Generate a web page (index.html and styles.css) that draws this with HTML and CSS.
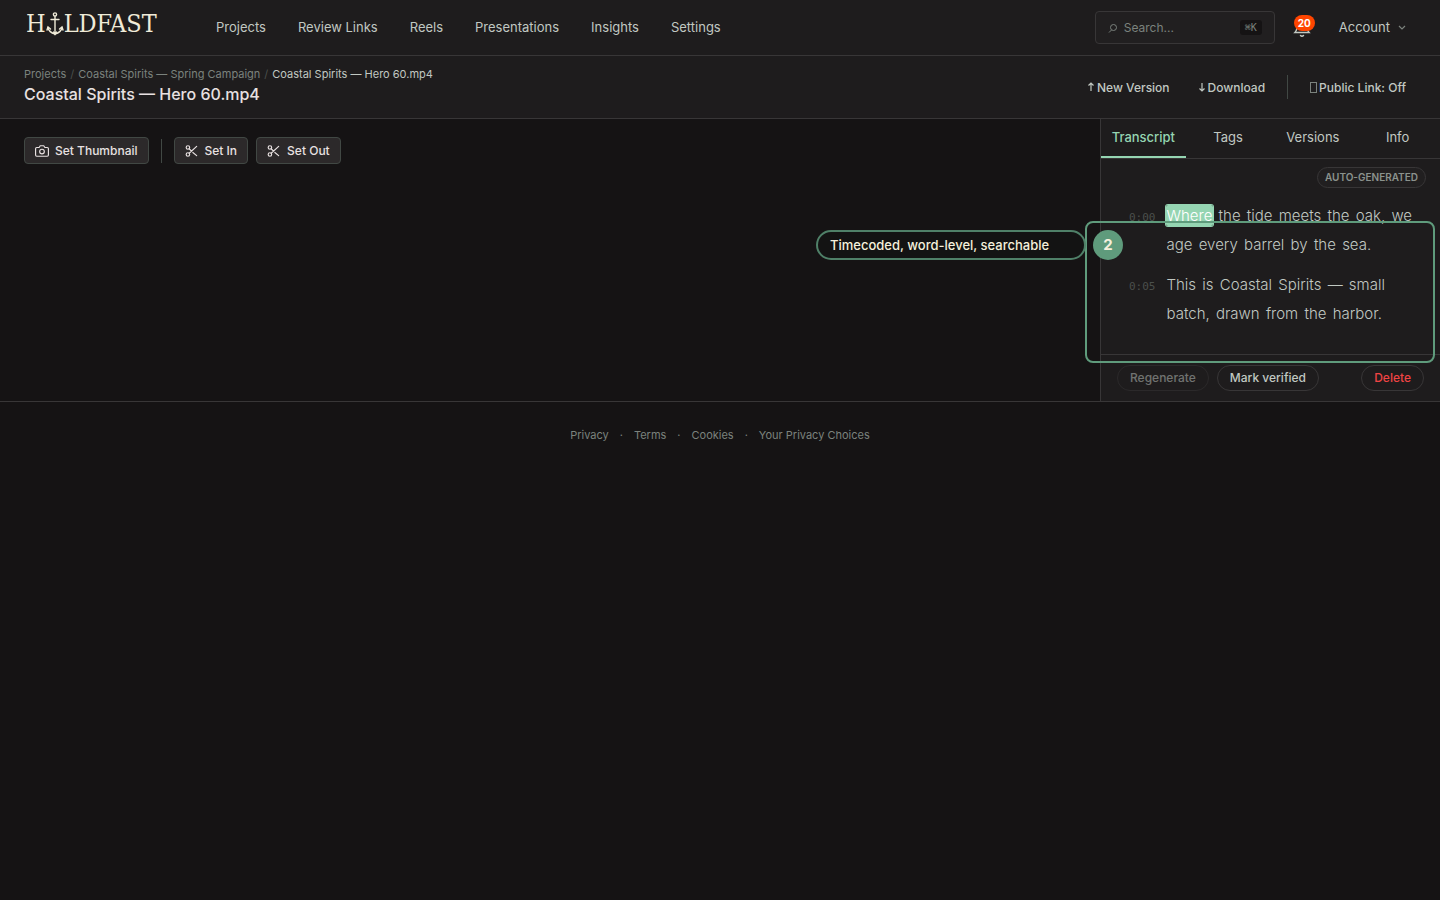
FILE: index.html
```html
<!DOCTYPE html>
<html lang="en">
<head>
<meta charset="UTF-8">
<meta name="viewport" content="width=device-width, initial-scale=1.0">
<title>Coastal Spirits — Hero 60.mp4</title>
<link rel="stylesheet" href="styles.css">
</head>
<body>

<header class="topbar">
    <a href="#" class="logo" aria-label="Holdfast">
        <span>H</span>
        <svg class="anchor" viewBox="0 0 18 24" fill="none" stroke="currentColor" stroke-width="1.4" stroke-linecap="round">
            <circle cx="9" cy="2.500" r="1.600"/>
            <path d="M9 4v18M5 7.500h8M2 16c1 4 3.500 5 7 6 3.500-1 6-2 7-6"/>
            <path d="M1 18l1-3 2.500 2M17 18l-1-3-2.500 2"/>
            <path d="M7.500 20L9 22.500l1.500-2.500" fill="currentColor"/>
        </svg>
        <span>LDFAST</span>
    </a>
    <nav class="main-nav">
        <a href="#">Projects</a>
        <a href="#">Review Links</a>
        <a href="#">Reels</a>
        <a href="#">Presentations</a>
        <a href="#">Insights</a>
        <a href="#">Settings</a>
    </nav>
    <div class="topbar-right">
        <label class="search">
            <svg width="10" height="10" viewBox="0 0 10 10" fill="none" stroke="currentColor">
                <circle cx="5.500" cy="4.500" r="3"/>
                <path d="M3.500 7L1 9.500"/>
            </svg>
            <input type="text" placeholder="Search..." aria-label="Search">
            <kbd>⌘K</kbd>
        </label>
        <button class="bell" aria-label="Notifications">
            <svg width="18" height="18" viewBox="0 0 18 18" fill="none" stroke="currentColor" stroke-width="1.500" stroke-linecap="round">
                <path d="M2 13.500h14c-1.500-1.500-2-3-2-6a5 5 0 0 0-10 0c0 3-.5 4.500-2 6z"/>
                <path d="M7.500 16.500c1 1 2 1 3 0"/>
            </svg>
            <span class="bell-count">20</span>
        </button>
        <button class="account">Account
            <svg width="8" height="8" viewBox="0 0 8 8" fill="none" stroke="currentColor" stroke-width="1.200"><path d="M1 3l3 3 3-3"/></svg>
        </button>
    </div>
</header>

<section class="asset-bar">
    <div>
        <nav class="breadcrumb">
            <a href="#">Projects</a>
            <span class="slash">/</span>
            <a href="#">Coastal Spirits — Spring Campaign</a>
            <span class="slash">/</span>
            <span class="current">Coastal Spirits — Hero 60.mp4</span>
        </nav>
        <h1>Coastal Spirits — Hero 60.mp4</h1>
    </div>
    <div class="asset-actions">
        <button><svg width="8" height="10" viewBox="0 0 8 10" fill="none" stroke="currentColor" stroke-width="1.200"><path d="M4 9V1M1.500 3.500L4 1l2.500 2.500"/></svg>New Version</button>
        <button><svg width="8" height="10" viewBox="0 0 8 10" fill="none" stroke="currentColor" stroke-width="1.200"><path d="M4 1v8M1.500 6.500L4 9l2.500-2.500"/></svg>Download</button>
        <span class="divider"></span>
        <button><span class="link-icon"></span>Public Link: Off</button>
    </div>
</section>

<main class="workspace">
    <div class="stage">
        <div class="tools">
            <button class="tool">
                <svg width="14" height="14" viewBox="0 0 24 24" fill="none" stroke="currentColor" stroke-width="2" stroke-linejoin="round">
                    <path d="M23 19a2 2 0 0 1-2 2H3a2 2 0 0 1-2-2V8a2 2 0 0 1 2-2h4l2-3h6l2 3h4a2 2 0 0 1 2 2z"/>
                    <circle cx="12" cy="13" r="4"/>
                </svg>
                Set Thumbnail
            </button>
            <span class="divider"></span>
            <button class="tool">
                <svg width="14" height="14" viewBox="0 0 24 24" fill="none" stroke="currentColor" stroke-width="2" stroke-linecap="round">
                    <circle cx="5" cy="6" r="3"/>
                    <circle cx="5" cy="18" r="3"/>
                    <path d="M20 4L7.120 15.880M13.470 14.480L20 20M7.120 8.120L11 12"/>
                </svg>
                Set In
            </button>
            <button class="tool">
                <svg width="14" height="14" viewBox="0 0 24 24" fill="none" stroke="currentColor" stroke-width="2" stroke-linecap="round">
                    <circle cx="5" cy="6" r="3"/>
                    <circle cx="5" cy="18" r="3"/>
                    <path d="M20 4L7.120 15.880M13.470 14.480L20 20M7.120 8.120L11 12"/>
                </svg>
                Set Out
            </button>
        </div>
    </div>

    <aside class="panel">
        <div class="tabs">
            <button class="active">Transcript</button>
            <button>Tags</button>
            <button>Versions</button>
            <button>Info</button>
        </div>
        <div class="status-row"><span class="status">AUTO-GENERATED</span></div>
        <div class="transcript">
            <div class="line">
                <time>0:00</time>
                <p><span class="word playing">Where</span> <span class="word">the</span> <span class="word">tide</span> <span class="word">meets</span> <span class="word">the</span> <span class="word">oak,</span> <span class="word">we</span> <span class="word">age</span> <span class="word">every</span> <span class="word">barrel</span> <span class="word">by</span> <span class="word">the</span> <span class="word">sea.</span></p>
            </div>
            <div class="line">
                <time>0:05</time>
                <p><span class="word">This</span> <span class="word">is</span> <span class="word">Coastal</span> <span class="word">Spirits</span> <span class="word">—</span> <span class="word">small</span> <span class="word">batch,</span> <span class="word">drawn</span> <span class="word">from</span> <span class="word">the</span> <span class="word">harbor.</span></p>
            </div>
        </div>
        <div class="panel-actions">
            <button disabled>Regenerate</button>
            <button>Mark verified</button>
            <button class="delete">Delete</button>
        </div>

        <!-- tour step over the transcript -->
        <div class="tour-frame">
            <span class="tour-label">Timecoded, word-level, searchable</span>
            <span class="tour-step">2</span>
        </div>
    </aside>
</main>

<footer class="footer">
    <a href="#">Privacy</a><span>·</span><a href="#">Terms</a><span>·</span><a href="#">Cookies</a><span>·</span><a href="#">Your Privacy Choices</a>
</footer>

</body>
</html>
```
FILE: styles.css
```css
* {
    box-sizing: border-box;
}
body {
    margin: 0;
    background-color: #151314;
    color: #c1c8c2;
    font-family: Inter, "Open Sans", sans-serif;
    font-size: 13px;
}
a {
    color: inherit;
    text-decoration: none;
}
button {
    font: inherit;
    color: inherit;
    background: none;
    border: none;
    padding: 0;
    cursor: pointer;
    white-space: nowrap;
}
svg {
    flex: none;
}
.divider {
    width: 1px;
    height: 24px;
    background-color: #414844;
}

/* top bar */
.topbar {
    display: flex;
    align-items: center;
    height: 56px;
    padding: 0 34px 0 26px;
    background-color: #1e1c1d;
    border-bottom: 1px solid #383637;
}
.logo {
    display: flex;
    align-items: center;
    width: 134px;
    margin: 0 56px 8px 0;
    color: #f0ebd8;
    font-family: "DejaVu Serif Condensed", "DejaVu Serif", serif;
    font-stretch: condensed;
    font-size: 25px;
    line-height: 32px;
}
.anchor {
    width: 18px;
    height: 24px;
}
.main-nav {
    display: flex;
    gap: 32px;
    padding-bottom: 2px;
}
.topbar-right {
    display: flex;
    align-items: center;
    margin-left: auto;
}
.search {
    display: flex;
    align-items: center;
    width: 180px;
    height: 33px;
    padding: 0 12px;
    border: 1px solid #383637;
    border-radius: 4px;
    background-color: #211f20;
    color: #7b827d;
}
.search input {
    flex: 1;
    min-width: 0;
    margin-left: 6px;
    padding: 0;
    border: none;
    outline: none;
    background: none;
    color: inherit;
    font: inherit;
    font-size: 12px;
}
.search input::placeholder {
    color: #7b827d;
}
.search kbd {
    padding: 0 5px;
    border-radius: 3px;
    background-color: #151314;
    font-family: "DejaVu Sans Mono", monospace;
    font-size: 10px;
    line-height: 15px;
}
.bell {
    position: relative;
    display: flex;
    margin: 0 28px 0 18px;
}
.bell-count {
    position: absolute;
    top: -4px;
    left: 1px;
    padding: 0 4px;
    border-radius: 8px;
    background-color: #ff4500;
    color: #fff;
    font-size: 10px;
    font-weight: 700;
    line-height: 16px;
}
.account {
    display: flex;
    align-items: center;
    gap: 8px;
    padding-bottom: 2px;
}
.account svg {
    color: #7b827d;
}

/* title and actions */
.asset-bar {
    display: flex;
    align-items: center;
    justify-content: space-between;
    height: 63px;
    padding: 0 34px 0 24px;
    background-color: #1e1c1d;
    border-bottom: 1px solid #383637;
}
.breadcrumb {
    display: flex;
    gap: 4px;
    color: #7b827d;
    font-size: 11px;
    line-height: 16px;
}
.breadcrumb .slash {
    color: #4b4f4c;
}
.breadcrumb .current {
    color: #c1c8c2;
}
h1 {
    margin: 0 0 2px;
    color: #e8e1e1;
    font-size: 16px;
    font-weight: 500;
    line-height: 24px;
}
.asset-actions {
    display: flex;
    align-items: center;
    font-size: 12px;
    font-weight: 500;
}
.asset-actions button {
    display: flex;
    align-items: center;
    gap: 2px;
    margin-left: 28px;
}
.asset-actions .divider {
    margin: 0 -6px 0 22px;
}
.link-icon {
    width: 7px;
    height: 11px;
    border: 1px solid #7b827d;
}

/* workspace */
.workspace {
    display: flex;
    border-bottom: 1px solid #383637;
}
.stage {
    flex: 1;
    padding: 18px 24px;
}
.tools {
    display: flex;
    align-items: center;
    gap: 8px;
}
.tools .divider {
    margin: 0 4px;
}
.tool {
    display: flex;
    align-items: center;
    gap: 6px;
    height: 27px;
    padding: 0 10px;
    border: 1px solid #414844;
    border-radius: 4px;
    background-color: #2c292a;
    color: #e8e1e1;
    font-size: 12px;
    font-weight: 500;
}

/* side panel */
.panel {
    position: relative;
    width: 340px;
    background-color: #1e1c1d;
    border-left: 1px solid #383637;
}
.tabs {
    display: grid;
    grid-template-columns: repeat(4, 1fr);
    border-bottom: 1px solid #383637;
}
.tabs button {
    height: 39px;
    padding-bottom: 2px;
    border-bottom: 2px solid transparent;
}
.tabs .active {
    border-color: #95d5b2;
    color: #95d5b2;
    font-weight: 500;
}
.status-row {
    display: flex;
    justify-content: flex-end;
    padding: 8px 14px 0;
}
.status {
    padding: 0 7px;
    border: 1px solid #383637;
    border-radius: 11px;
    background-color: #211f20;
    color: #8b928d;
    font-size: 10px;
    font-weight: 600;
    line-height: 19px;
}
.transcript {
    padding: 13px 20px 26px 28px;
}
.line {
    display: flex;
    align-items: baseline;
    gap: 10px;
}
.line + .line {
    margin-top: 11px;
}
.line time {
    color: #4b4f4c;
    font-family: "DejaVu Sans Mono", monospace;
    font-size: 11px;
}
.line p {
    margin: 0;
    font-size: 15px;
    font-weight: 300;
    line-height: 29px;
}
.word {
    padding: 1px;
    border-radius: 2px;
}
.playing {
    background-color: #95d5b2;
    color: #fff;
    box-shadow: 0 0 0 1px #95d5b2;
}
.panel-actions {
    display: flex;
    gap: 8px;
    padding: 10px 16px;
    border-top: 1px solid #383637;
}
.panel-actions button {
    height: 26px;
    padding: 0 12px 2px;
    border: 1px solid #383637;
    border-radius: 13px;
    font-size: 12px;
    font-weight: 500;
}
.panel-actions button:disabled {
    opacity: 0.5;
}
.panel-actions .delete {
    margin-left: auto;
    color: #ef4444;
}

/* guided tour */
.tour-frame {
    position: absolute;
    top: 102px;
    right: 5px;
    bottom: 38px;
    left: -16px;
    border: 2px solid #5f9b7c;
    border-radius: 8px;
}
.tour-label {
    position: absolute;
    top: 7px;
    right: 100%;
    width: 270px;
    margin-right: 1px;
    padding: 0 12px;
    border: 2px solid #4f8068;
    border-radius: 15px;
    background-color: #131313;
    color: #f5f0dc;
    font-size: 13px;
    font-weight: 500;
    line-height: 26px;
}
.tour-step {
    position: absolute;
    top: 7px;
    left: 6px;
    width: 30px;
    border-radius: 50%;
    background-color: #5f9b7c;
    color: #f5f0dc;
    font-size: 15px;
    font-weight: 700;
    line-height: 30px;
    text-align: center;
}

.footer {
    display: flex;
    justify-content: center;
    gap: 11px;
    padding: 24px;
    color: #7b827d;
    font-size: 11px;
    line-height: 18px;
}
```
